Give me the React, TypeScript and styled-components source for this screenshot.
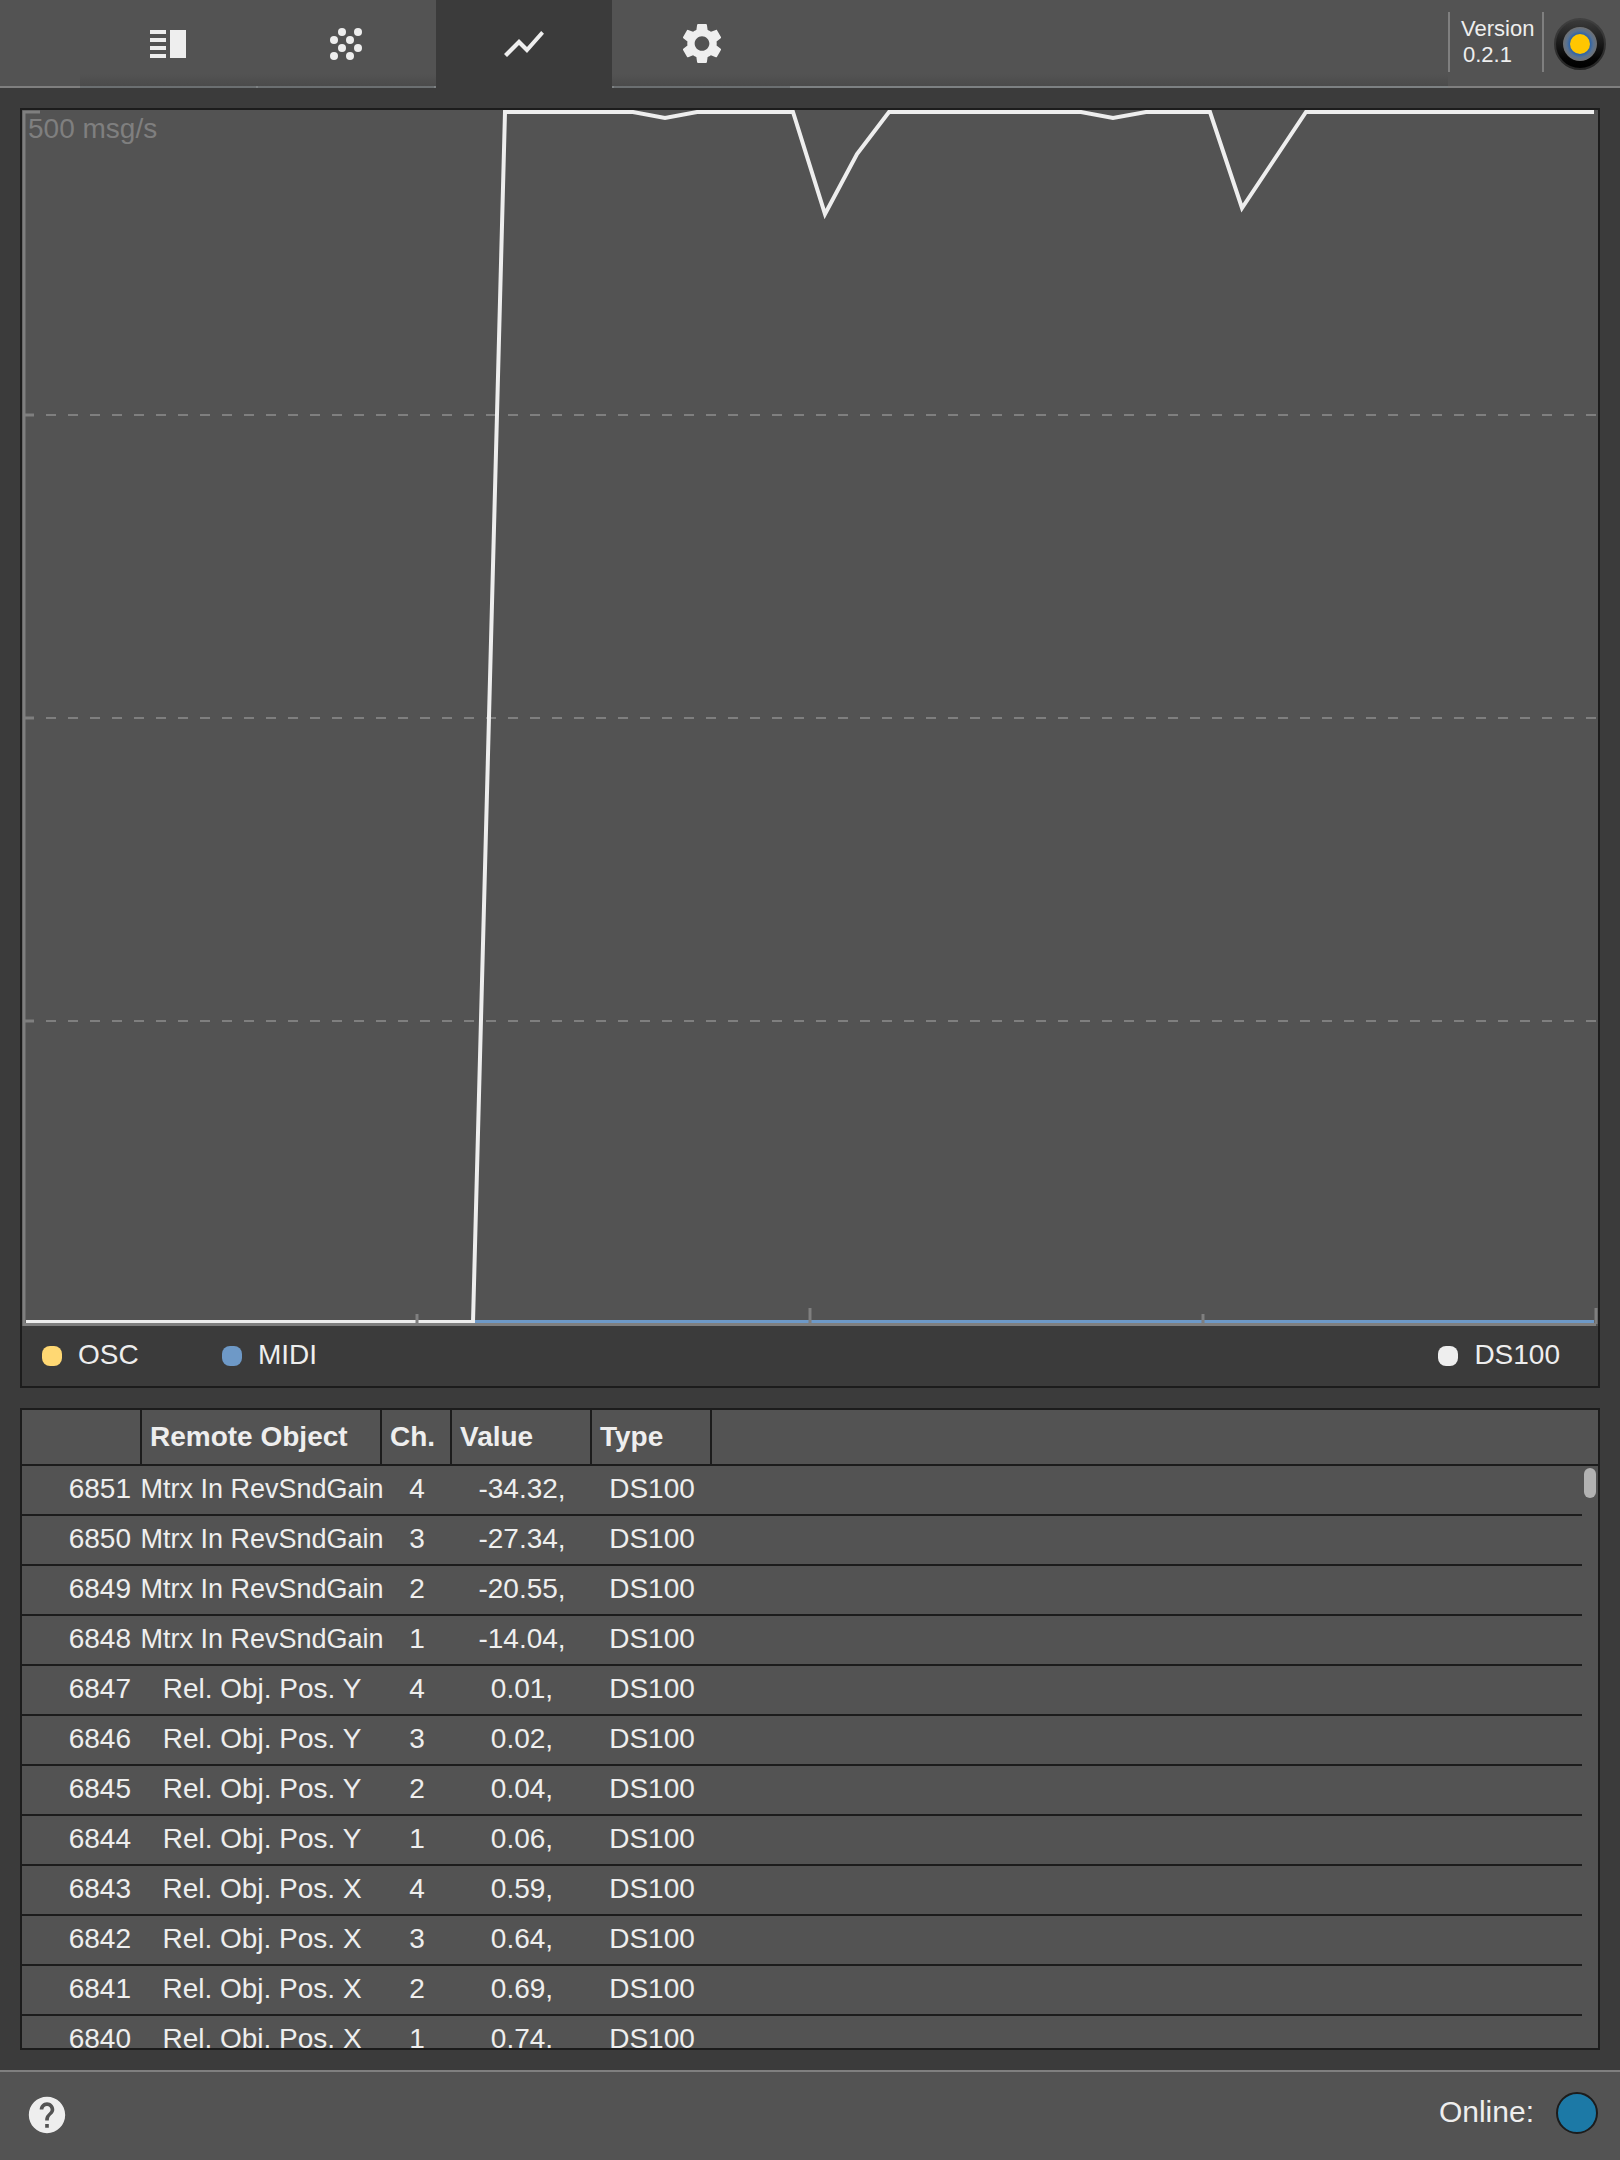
import React from "react";
import styled, { createGlobalStyle, css } from "styled-components";

const color = {
  page: "#3b3b3b",
  panel: "#535353",
  edge: "#1c1c1c",
  line: "#7f7f7f",
  text: "#eeeeee",
  osc: "#ffd873",
  midi: "#6e99c7",
  ds100: "#eeeeee",
  online: "#1c79a6",
};

const GlobalStyle = createGlobalStyle`
  *, *::before, *::after { box-sizing: border-box; }
  body {
    margin: 0;
    background: ${color.page};
    color: ${color.text};
    font-family: "Liberation Sans", Arial, Helvetica, sans-serif;
    font-size: 28px;
  }
`;

const Page = styled.div`
  display: grid;
  grid-template-rows: auto minmax(0, 1fr) auto;
  height: 100vh;
`;

const Header = styled.header`
  display: flex;
  height: 88px;
  background: linear-gradient(${color.line}, ${color.line}) bottom / 100% 2px no-repeat ${color.panel};
`;

const Tabs = styled.nav`
  display: flex;
  flex: 1;
  gap: 2px;
  margin-left: 80px;
  background:
    linear-gradient(#7d8183, #7d8183) bottom / 100% 2px no-repeat,
    linear-gradient(to bottom, transparent 74px, #4b4b4b 86px);
`;

const Tab = styled.button<{ $active?: boolean }>`
  display: flex;
  align-items: center;
  justify-content: center;
  width: 176px;
  padding: 0;
  border: 0;
  border-bottom: 2px solid #6b6f71;
  background: transparent;
  color: ${color.text};
  ${(p) =>
    p.$active &&
    css`
      border-bottom-color: ${color.page};
      background: ${color.page};
    `}
`;

const TabIcon = styled.svg`
  width: 48px;
  height: 48px;
  fill: currentColor;
`;

const Version = styled.div`
  align-self: flex-start;
  width: 96px;
  height: 60px;
  margin-top: 12px;
  padding: 4px 0 0 11px;
  border-left: 2px solid ${color.line};
  border-right: 2px solid ${color.line};
  font-size: 22px;
  line-height: 26px;
`;

const VersionNumber = styled.div`
  padding-left: 2px;
`;

const Logo = styled.svg`
  width: 52px;
  height: 52px;
  margin: 18px 14px 0 10px;
`;

const Main = styled.main`
  display: grid;
  grid-template-rows: minmax(0, 640fr) minmax(0, 321fr);
  gap: 20px;
  padding: 20px;
  min-height: 0;
`;

const Panel = styled.section`
  display: flex;
  flex-direction: column;
  min-height: 0;
  border: 2px solid ${color.edge};
`;

const Plot = styled.div`
  position: relative;
  flex: 1;
  min-height: 0;
  background: ${color.panel};
`;

const PlotSvg = styled.svg`
  display: block;
  width: 100%;
  height: 100%;
  fill: none;
`;

const PlotLabel = styled.span`
  position: absolute;
  top: 3px;
  left: 6px;
  color: ${color.line};
  line-height: 32px;
`;

const Legend = styled.ul`
  display: flex;
  align-items: center;
  height: 60px;
  margin: 0;
  padding: 0 38px 0 20px;
  list-style: none;
`;

const LegendItem = styled.li<{ $last?: boolean }>`
  display: flex;
  align-items: center;
  gap: 16px;
  min-width: 180px;
  ${(p) =>
    p.$last &&
    css`
      min-width: 0;
      margin-left: auto;
    `}
`;

const LegendLabel = styled.span`
  padding-bottom: 2px;
  line-height: 32px;
`;

const Swatch = styled.span<{ $color: string }>`
  width: 20px;
  height: 20px;
  border-radius: 8px;
  background: ${(p) => p.$color};
`;

const TablePanel = styled(Panel)`
  position: relative;
  overflow: hidden;
  background: ${color.panel};
`;

const Table = styled.table`
  width: 100%;
  table-layout: fixed;
  border-collapse: separate;
  border-spacing: 0;
  white-space: nowrap;
`;

const HeadCell = styled.th<{ $last?: boolean }>`
  height: 56px;
  padding: 0 0 0 8px;
  border-bottom: 2px solid ${color.edge};
  border-right: ${(p) => (p.$last ? "0" : `2px solid ${color.edge}`)};
  text-align: left;
  font-weight: bold;
`;

const Cell = styled.td<{ $align?: "right" | "center" }>`
  height: 50px;
  padding: ${(p) => (p.$align === "right" ? "0 11px 2px 0" : "0 0 2px")};
  border-bottom: 2px solid ${color.edge};
  text-align: ${(p) => p.$align ?? "center"};
  line-height: 32px;
`;

const Gutter = styled.td`
  padding: 0;
`;

const LongName = styled.span`
  display: flex;
  justify-content: center;
  font-size: 27px;
`;

const ScrollThumb = styled.div`
  position: absolute;
  top: 58px;
  right: 2px;
  width: 12px;
  height: 30px;
  border-radius: 6px;
  background: #b2b2b2;
`;

const Footer = styled.footer`
  display: flex;
  align-items: center;
  justify-content: space-between;
  height: 90px;
  padding: 0 22px 6px 27px;
  border-top: 2px solid ${color.line};
  background: ${color.panel};
`;

const HelpButton = styled.button`
  display: flex;
  padding: 4px 0 0;
  border: 0;
  background: transparent;
  color: ${color.text};
`;

const HelpIcon = styled.svg`
  width: 40px;
  height: 40px;
  fill: currentColor;
`;

const Status = styled.div`
  display: flex;
  align-items: center;
  gap: 22px;
  font-size: 30px;
  line-height: 36px;
`;

const StatusLabel = styled.span`
  padding-bottom: 2px;
`;

const StatusLight = styled.span`
  width: 42px;
  height: 42px;
  border: 2px solid ${color.edge};
  border-radius: 50%;
  background: ${color.online};
`;

type Row = [number, string, number, string];

const rows: Row[] = [
  [6851, "Mtrx In RevSndGain", 4, "-34.32,"],
  [6850, "Mtrx In RevSndGain", 3, "-27.34,"],
  [6849, "Mtrx In RevSndGain", 2, "-20.55,"],
  [6848, "Mtrx In RevSndGain", 1, "-14.04,"],
  [6847, "Rel. Obj. Pos. Y", 4, "0.01,"],
  [6846, "Rel. Obj. Pos. Y", 3, "0.02,"],
  [6845, "Rel. Obj. Pos. Y", 2, "0.04,"],
  [6844, "Rel. Obj. Pos. Y", 1, "0.06,"],
  [6843, "Rel. Obj. Pos. X", 4, "0.59,"],
  [6842, "Rel. Obj. Pos. X", 3, "0.64,"],
  [6841, "Rel. Obj. Pos. X", 2, "0.69,"],
  [6840, "Rel. Obj. Pos. X", 1, "0.74,"],
];

const dots = [
  [20, 13], [36, 13], [12, 21], [28, 21], [20, 29], [36, 29], [12, 37], [28, 37],
];

function TrafficPlot() {
  return (
    <PlotSvg viewBox="0 0 1576 1216" preserveAspectRatio="none" role="img" aria-label="Messages per second">
      <g stroke={color.line} strokeWidth="2" strokeDasharray="10 12">
        <path d="M2 305H1574M2 608H1574M2 911H1574" />
      </g>
      <path d="M2 305H12M2 608H12M2 911H12" stroke={color.line} strokeWidth="3" />
      <path d="M451 1212H1572" stroke={color.midi} strokeWidth="4" />
      <path
        d="M4 1212H451L483 2H611L643 8L675 2H771L803 104L835 44L867 2H1059L1091 8L1124 2H1188L1220 98L1284 2H1572"
        stroke={color.ds100}
        strokeWidth="4"
      />
      <path d="M18 2H2V1214.500H1574" stroke={color.line} strokeWidth="3" />
      <path d="M395 1214V1204M788 1214V1198M1181 1214V1204M1574 1214V1198" stroke={color.line} strokeWidth="3" />
    </PlotSvg>
  );
}

export default function App() {
  return (
    <>
      <GlobalStyle />
      <Page>
        <Header>
          <Tabs>
            <Tab aria-label="Table view">
              <TabIcon viewBox="0 0 48 48">
                <path d="M6 11h16v4H6zM6 19h16v4H6zM6 27h16v4H6zM6 35h16v4H6zM26 11h16v28H26z" />
              </TabIcon>
            </Tab>
            <Tab aria-label="Multi surface">
              <TabIcon viewBox="0 0 48 48">
                {dots.map(([x, y]) => (
                  <circle key={`${x}-${y}`} cx={x} cy={y} r="4" />
                ))}
              </TabIcon>
            </Tab>
            <Tab $active aria-label="Statistics">
              <TabIcon viewBox="0 -0.5 24 24">
                <path d="M3.5 18.49l6-6.01 4 4L22 6.92l-1.41-1.41-7.09 7.97-4-4L2 16.99z" />
              </TabIcon>
            </Tab>
            <Tab aria-label="Settings">
              <TabIcon viewBox="0.25 0 23.5 23.5">
                <path d="M19.14,12.94c0.04-0.3,0.06-0.61,0.06-0.94c0-0.32-0.02-0.64-0.07-0.94l2.03-1.58c0.18-0.14,0.23-0.41,0.12-0.61l-1.92-3.32c-0.12-0.22-0.37-0.29-0.59-0.22l-2.39,0.96c-0.5-0.38-1.03-0.7-1.62-0.94L14.4,2.81c-0.04-0.24-0.24-0.41-0.48-0.41h-3.84c-0.24,0-0.43,0.17-0.47,0.41L9.25,5.35C8.66,5.59,8.12,5.92,7.63,6.29L5.24,5.33c-0.22-0.08-0.47,0-0.59,0.22L2.74,8.87C2.62,9.08,2.66,9.34,2.86,9.48l2.03,1.58C4.84,11.36,4.8,11.69,4.8,12s0.02,0.64,0.07,0.94l-2.03,1.58c-0.18,0.14-0.23,0.41-0.12,0.61l1.92,3.32c0.12,0.22,0.37,0.29,0.59,0.22l2.39-0.96c0.5,0.38,1.03,0.7,1.62,0.94l0.36,2.54c0.05,0.24,0.24,0.41,0.48,0.41h3.84c0.24,0,0.44-0.17,0.47-0.41l0.36-2.54c0.59-0.24,1.13-0.56,1.62-0.94l2.39,0.96c0.22,0.08,0.47,0,0.59-0.22l1.92-3.32c0.12-0.22,0.07-0.47-0.12-0.61L19.14,12.94z M12,15.6c-1.98,0-3.6-1.62-3.6-3.6s1.62-3.6,3.6-3.6s3.6,1.62,3.6,3.6S13.98,15.6,12,15.6z" />
              </TabIcon>
            </Tab>
          </Tabs>
          <Version>
            Version
            <VersionNumber>0.2.1</VersionNumber>
          </Version>
          <Logo viewBox="0 0 52 52" role="img" aria-label="Logo">
            <defs>
              <linearGradient id="knob" x1="0" y1="0" x2="0" y2="1">
                <stop offset="0" stopColor="#3c3c3c" />
                <stop offset="0.8" stopColor="#040404" />
                <stop offset="1" stopColor="#000000" />
              </linearGradient>
              <linearGradient id="rim" x1="0" y1="0" x2="0" y2="1">
                <stop offset="0" stopColor="#404040" />
                <stop offset="1" stopColor="#242424" />
              </linearGradient>
              <radialGradient id="glow">
                <stop offset="0.56" stopColor="#2460ac" />
                <stop offset="0.78" stopColor="#5a7290" />
                <stop offset="1" stopColor="#707070" />
              </radialGradient>
            </defs>
            <circle cx="26" cy="26" r="25" fill="url(#knob)" stroke="url(#rim)" strokeWidth="2" />
            <circle cx="26" cy="26" r="17" fill="url(#glow)" />
            <circle cx="26" cy="26" r="10" fill="#ffc600" />
          </Logo>
        </Header>

        <Main>
          <Panel>
            <Plot>
              <TrafficPlot />
              <PlotLabel>500 msg/s</PlotLabel>
            </Plot>
            <Legend>
              <LegendItem>
                <Swatch $color={color.osc} />
                <LegendLabel>OSC</LegendLabel>
              </LegendItem>
              <LegendItem>
                <Swatch $color={color.midi} />
                <LegendLabel>MIDI</LegendLabel>
              </LegendItem>
              <LegendItem $last>
                <Swatch $color={color.ds100} />
                <LegendLabel>DS100</LegendLabel>
              </LegendItem>
            </Legend>
          </Panel>

          <TablePanel>
            <Table>
              <colgroup>
                <col width="120" />
                <col width="240" />
                <col width="70" />
                <col width="140" />
                <col width="120" />
                <col />
                <col width="16" />
              </colgroup>
              <thead>
                <tr>
                  <HeadCell aria-label="Number" />
                  <HeadCell>Remote Object</HeadCell>
                  <HeadCell>Ch.</HeadCell>
                  <HeadCell>Value</HeadCell>
                  <HeadCell>Type</HeadCell>
                  <HeadCell $last colSpan={2} aria-hidden />
                </tr>
              </thead>
              <tbody>
                {rows.map(([id, name, channel, value]) => (
                  <tr key={id}>
                    <Cell $align="right">{id}</Cell>
                    <Cell>{name.length > 16 ? <LongName>{name}</LongName> : name}</Cell>
                    <Cell>{channel}</Cell>
                    <Cell>{value}</Cell>
                    <Cell>DS100</Cell>
                    <Cell />
                    <Gutter />
                  </tr>
                ))}
              </tbody>
            </Table>
            <ScrollThumb />
          </TablePanel>
        </Main>

        <Footer>
          <HelpButton aria-label="Help">
            <HelpIcon viewBox="1 1 22 22">
              <path d="M12 2C6.48 2 2 6.48 2 12s4.48 10 10 10 10-4.48 10-10S17.52 2 12 2zm1 17h-2v-2h2v2zm2.07-7.75l-.9.92C13.45 12.9 13 13.5 13 15h-2v-.5c0-1.1.45-2.1 1.17-2.83l1.24-1.26c.37-.36.59-.86.59-1.41 0-1.1-.9-2-2-2s-2 .9-2 2H8c0-2.21 1.79-4 4-4s4 1.79 4 4c0 .88-.36 1.68-.93 2.25z" />
            </HelpIcon>
          </HelpButton>
          <Status role="status">
            <StatusLabel>Online:</StatusLabel>
            <StatusLight />
          </Status>
        </Footer>
      </Page>
    </>
  );
}
